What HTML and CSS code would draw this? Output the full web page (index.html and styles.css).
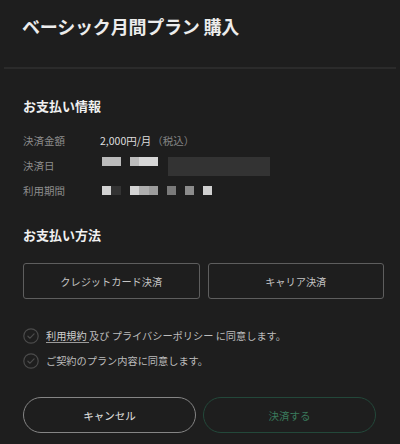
FILE: index.html
```html
<!DOCTYPE html>
<html lang="ja">
<head>
<meta charset="utf-8">
<link rel="stylesheet" href="styles.css">
</head>
<body>
<div class="modal">
  <header class="header">
    <h1 class="title">ベーシック月間プラン 購入</h1>
  </header>
  <div class="divider"></div>
  <main class="content">
    <h2 class="section-title first">お支払い情報</h2>
    <div class="info">
      <div class="label">決済金額</div>
      <div class="value">2,000円/月<span class="tax">（税込）</span></div>
      <div class="label">決済日</div>
      <div class="value blocks top">
        <span class="blk" style="width:19px;background:#bbbbbb"></span>
        <span class="blk sp" style="width:9px;background:#bdbdbd"></span><span class="blk" style="width:19px;background:#d6d6d6"></span>
        <span class="blk dark sp"></span>
      </div>
      <div class="label">利用期間</div>
      <div class="value blocks">
        <span class="blk" style="width:9px;background:#d2d2d2"></span><span class="blk" style="width:10px;background:#333333"></span>
        <span class="blk sp" style="width:9px;background:#d4d4d4"></span><span class="blk" style="width:10px;background:#aeaeae"></span><span class="blk" style="width:9px;background:#9c9c9c"></span>
        <span class="blk sp" style="width:9px;background:#7a7a7a"></span>
        <span class="blk sp" style="width:9px;background:#8c8c8c"></span>
        <span class="blk sp" style="width:9px;background:#d0d0d0"></span>
      </div>
    </div>

    <h2 class="section-title second">お支払い方法</h2>
    <div class="methods">
      <button class="method">クレジットカード決済</button>
      <button class="method">キャリア決済</button>
    </div>

    <div class="agree">
      <label class="check">
        <svg class="circle" width="16" height="16" viewBox="0 0 16 16"><circle cx="8" cy="8" r="7.2" fill="none" stroke="#4b4b4b" stroke-width="1.2"/><polyline points="4.9,8.2 7,10.2 11.1,5.9" fill="none" stroke="#4b4b4b" stroke-width="1.2" stroke-linecap="round" stroke-linejoin="round"/></svg>
        <span><span class="link">利用規約 </span>及び プライバシーポリシー に同意します。</span>
      </label>
      <label class="check">
        <svg class="circle" width="16" height="16" viewBox="0 0 16 16"><circle cx="8" cy="8" r="7.2" fill="none" stroke="#4b4b4b" stroke-width="1.2"/><polyline points="4.9,8.2 7,10.2 11.1,5.9" fill="none" stroke="#4b4b4b" stroke-width="1.2" stroke-linecap="round" stroke-linejoin="round"/></svg>
        <span>ご契約のプラン内容に同意します。</span>
      </label>
    </div>

    <div class="actions">
      <button class="pill cancel">キャンセル</button>
      <button class="pill submit" disabled>決済する</button>
    </div>
  </main>
</div>
</body>
</html>
```
FILE: styles.css
```css
* { box-sizing: border-box; }
html, body { margin: 0; padding: 0; }
body {
  background: #1e1e1e;
  width: 400px;
  height: 444px;
  overflow: hidden;
  font-family: "Noto Sans CJK JP", "Noto Sans", sans-serif;
  color: #dddddd;
}
.header {
  height: 67px;
  padding: 13px 0 0 22px;
}
.title {
  margin: 0;
  font-size: 18px;
  line-height: 26px;
  font-weight: 700;
  color: #ececec;
  letter-spacing: -0.2px;
}
.divider {
  height: 2px;
  margin: 0 4px;
  background: #2b2b2b;
}
.content {
  padding: 0 16px 0 23px;
}
.section-title {
  margin: 0;
  font-size: 13px;
  line-height: 20px;
  font-weight: 700;
  color: #f0f0f0;
}
.section-title.first { margin-top: 27px; }
.section-title.second { margin-top: 22px; }
.info {
  margin-top: 12px;
  display: grid;
  grid-template-columns: 77px 1fr;
  grid-auto-rows: 25px;
  align-items: center;
  font-size: 10.5px;
}
.label { color: #8d8d8d; }
.value { color: #dedede; font-size: 10.5px; }
.tax { color: #848484; font-size: 10.5px; margin-left: 1px; }
.blocks {
  display: flex;
  align-items: center;
  padding-left: 2px;
  height: 9px;
}
.blocks.top {
  align-self: start;
  margin-top: 4px;
  height: 19px;
  align-items: flex-start;
}
.blk { display: block; height: 9px; }
.blk.sp { margin-left: 9px; }
.blk.dark { width: 102px; height: 19px; background: #333333; margin-left: 10px; }
.methods {
  margin-top: 18px;
  display: flex;
  gap: 8px;
}
.method {
  flex: 1;
  height: 36px;
  background: transparent;
  border: 1px solid #5e5e5e;
  border-radius: 3px;
  color: #c4c4c4;
  font-family: inherit;
  font-size: 10.2px;
  padding: 0;
}
.agree {
  margin-top: 24px;
  display: flex;
  flex-direction: column;
}
.check {
  display: flex;
  align-items: center;
  height: 25px;
  font-size: 10.2px;
  color: #bcbcbc;
}
.circle { margin-left: 0; margin-right: 7px; flex: none; }
.link {
  color: #cfcfcf;
  text-decoration: underline;
  text-decoration-color: #9a9a9a;
  text-underline-offset: 2px;
}
.actions {
  margin-top: 24px;
  width: 353px;
  display: flex;
  gap: 7px;
}
.pill {
  flex: 1;
  height: 36px;
  border-radius: 18px;
  background: transparent;
  font-family: inherit;
  font-size: 10.5px;
  padding: 0;
}
.cancel {
  border: 1px solid #858585;
  color: #e2e2e2;
}
.submit {
  border: 1px solid #23483a;
  color: #3a7a5c;
}
```
